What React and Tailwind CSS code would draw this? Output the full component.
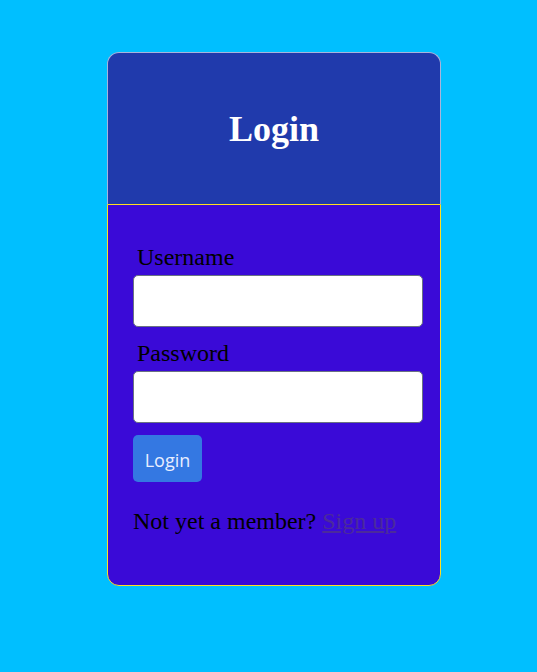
import React from 'react';

const serif = { fontFamily: '"Liberation Serif", "Times New Roman", serif' };

const App = () => {
  return (
    <div className="min-h-screen w-full bg-[#00bfff] pt-[52px]" style={serif}>
      <div className="ml-[107px] w-[334px] flex flex-col">
        <div className="h-[152px] flex items-center justify-center rounded-t-xl border border-b-0 border-[#a8b4dc] bg-[#203aac]">
          <h1 className="text-[36px] font-bold text-white leading-none">Login</h1>
        </div>
        <div className="border border-solid border-yellow-300 bg-[#3a0ad7] rounded-b-xl pt-[38px] pb-[50px] pl-[25px] pr-[17px]">
          <label className="block pl-[4px] text-[24px] leading-[28px] text-black">Username</label>
          <input
            type="text"
            className="mt-[4px] block w-[290px] h-[52px] rounded-[5px] border border-gray-500 bg-white"
          />
          <label className="block mt-[12px] pl-[4px] text-[24px] leading-[28px] text-black">Password</label>
          <input
            type="password"
            className="mt-[4px] block w-[290px] h-[52px] rounded-[5px] border border-gray-500 bg-white"
          />
          <button
            className="mt-[12px] h-[47px] w-[69px] pt-[3px] rounded-[5px] bg-[#3478e2] text-[18px] text-[#e8eeff]"
            style={{ fontFamily: '"Open Sans", "Noto Sans", sans-serif' }}
          >
            Login
          </button>
          <p className="mt-[25px] text-[24px] leading-[28px] text-black">
            Not yet a member?{' '}
            <a href="#" className="underline text-[#4b2a9c]">
              Sign up
            </a>
          </p>
        </div>
      </div>
    </div>
  );
};

export default App;
